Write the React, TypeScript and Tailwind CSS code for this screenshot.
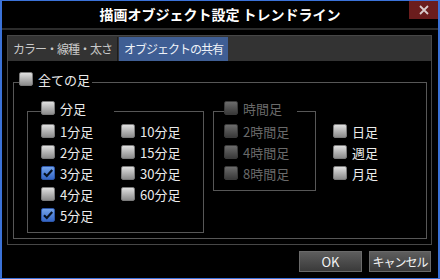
import React from "react";

type Opt = { label: string; checked?: boolean; disabled?: boolean };

function Box({ checked, disabled }: { checked?: boolean; disabled?: boolean }) {
  const skin = checked
    ? "from-[#74a3ea] to-[#3566c6] border-[#2d56a8]"
    : disabled
    ? "from-[#6c6c6c] to-[#3a3a3a] border-[#3a3a3a]"
    : "from-[#e0e0e0] to-[#8c8c8c] border-[#7a7a7a]";
  return (
    <span className={`w-[14px] h-[14px] shrink-0 rounded-[2px] border bg-linear-to-b ${skin} flex items-center justify-center`}>
      {checked && (
        <svg width="12" height="12" viewBox="0 0 12 12">
          <path d="M2 6.2 L4.8 9 L10.2 3" fill="none" stroke="#06101f" strokeWidth="2.2" />
        </svg>
      )}
    </span>
  );
}

function Check({ label, checked, disabled }: Opt) {
  return (
    <div className="flex items-center gap-[5px] h-[14px]">
      <Box checked={checked} disabled={disabled} />
      <span className={`text-[13px] leading-none whitespace-nowrap ${disabled ? "text-[#6a6a6a]" : "text-[#ececec]"}`}>
        {label}
      </span>
    </div>
  );
}

function Legend({ label, disabled, ml }: { label: string; disabled?: boolean; ml: string }) {
  return (
    <legend className={`${ml} w-[73px] h-[20px]`}>
      <Check label={label} disabled={disabled} />
    </legend>
  );
}

const minutes: Opt[] = [
  { label: "1分足" },
  { label: "10分足" },
  { label: "2分足" },
  { label: "15分足" },
  { label: "3分足", checked: true },
  { label: "30分足" },
  { label: "4分足" },
  { label: "60分足" },
  { label: "5分足", checked: true },
];

const hours: Opt[] = [
  { label: "2時間足", disabled: true },
  { label: "4時間足", disabled: true },
  { label: "8時間足", disabled: true },
];

const days: Opt[] = [{ label: "日足" }, { label: "週足" }, { label: "月足" }];

export default function App() {
  return (
    <div className="w-[440px] h-[279px] bg-black border-x-2 border-y border-[#3b72d8] flex flex-col overflow-hidden font-['Noto_Sans_CJK_JP','Noto_Sans',sans-serif]">
      <div className="h-[27px] flex shrink-0">
        <div className="w-[29px]" />
        <div className="flex-1 text-center text-white font-bold text-[14px] leading-[27px]">
          描画オブジェクト設定 トレンドライン
        </div>
        <div className="w-[29px] h-[18px] bg-[#6b1d1d] flex items-center justify-center">
          <svg width="10" height="10" viewBox="0 0 10 10">
            <path d="M1 1 L9 9 M9 1 L1 9" stroke="#d9cccc" strokeWidth="1.8" />
          </svg>
        </div>
      </div>
      <div className="h-[2px] bg-[#2c2c2c] shrink-0" />

      <div className="pl-[5px] pr-[6px] pt-[5px]">
        <div className="border border-[#474747]">
          <div className="h-[25px] bg-[#333333] flex items-end text-[12px] tracking-[-1px]">
            <div className="w-[110px] h-[24px] pl-[5px] flex items-center text-[#c9c9c9] border-r border-[#1c1c1c]">
              カラー・線種・太さ
            </div>
            <div className="ml-[1px] w-[109px] h-[24px] pl-[5px] flex items-center text-[#eef2f8] bg-[#3f5e94]">
              オブジェクトの共有
            </div>
          </div>

          <div className="bg-black pt-[11px] pl-[5px] pr-[4px] pb-[5px]">
            <fieldset className="border border-[#575757]">
              <Legend label="全ての足" ml="ml-[5px]" />
              <div className="flex items-start pl-[13px] pt-[9px] pb-[5px]">
                <fieldset className="w-[177px] border border-[#575757]">
                  <Legend label="分足" ml="ml-[13px]" />
                  <div className="grid grid-cols-[80px_80px] gap-y-[7px] pl-[13px] pt-[3px] pb-[10px]">
                    {minutes.map((m) => (
                      <Check key={m.label} {...m} />
                    ))}
                  </div>
                </fieldset>

                <fieldset className="w-[103px] ml-[9px] border border-[#575757]">
                  <Legend label="時間足" ml="ml-[10px]" disabled />
                  <div className="flex flex-col gap-[7px] pl-[10px] pt-[3px] pb-[10px]">
                    {hours.map((h) => (
                      <Check key={h.label} {...h} />
                    ))}
                  </div>
                </fieldset>

                <div className="flex flex-col gap-[7px] ml-[17px] pt-[23px]">
                  {days.map((d) => (
                    <Check key={d.label} {...d} />
                  ))}
                </div>
              </div>
            </fieldset>
          </div>
        </div>
      </div>

      <div className="flex justify-end gap-[7px] pr-[7px] pt-[6px]">
        <button className="w-[63px] h-[21px] border border-[#6a6a6a] bg-linear-to-b from-[#5e5e5e] to-[#3a3a3a] text-[#f2f2f2] text-[13px] leading-none">
          OK
        </button>
        <button className="w-[62px] h-[21px] border border-[#6a6a6a] bg-linear-to-b from-[#5e5e5e] to-[#3a3a3a] text-[#f2f2f2] text-[12px] tracking-[-1px] leading-none">
          キャンセル
        </button>
      </div>
    </div>
  );
}
